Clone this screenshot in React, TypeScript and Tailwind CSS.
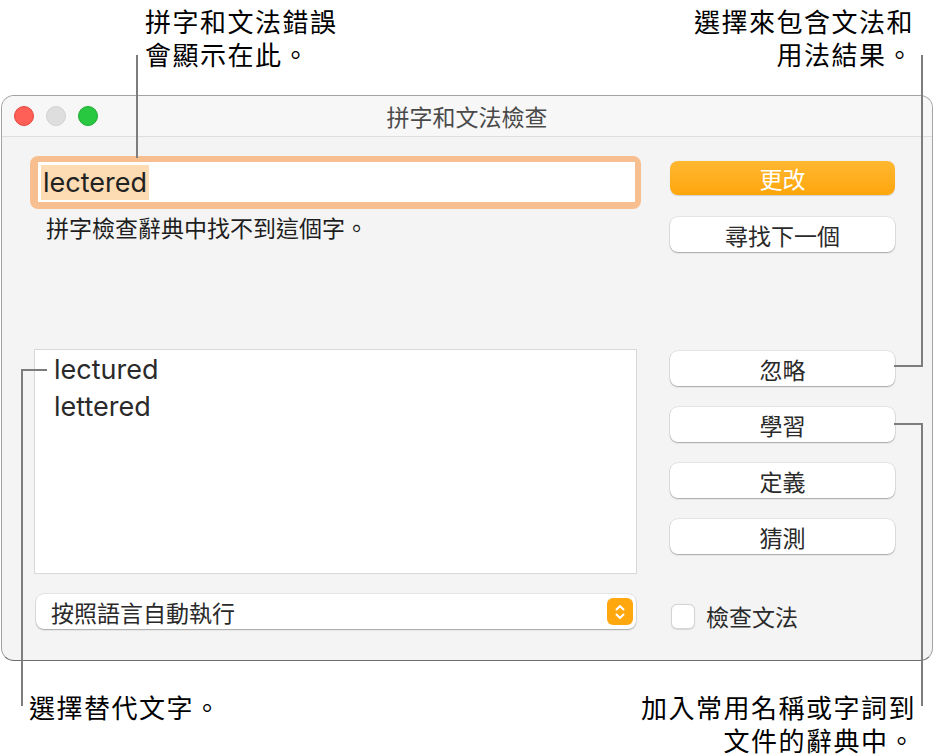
import React from "react";

const cjk = '"Noto Sans CJK TC", "Noto Sans CJK SC", sans-serif';
const latin = 'Inter, "Noto Sans CJK TC", sans-serif';

function Btn({ label, className = "" }: { label: string; className?: string }) {
  return (
    <div
      className={
        "h-[35px] w-[225px] rounded-[8px] bg-white flex items-center justify-center text-[23px] leading-[28px] text-[#2a2a2a] shadow-[0_0_0_0.5px_rgba(0,0,0,0.12),0_1px_1.5px_rgba(0,0,0,0.28)] " +
        className
      }
      style={{ fontFamily: cjk }}
    >
      {label}
    </div>
  );
}

export default function App() {
  return (
    <div className="relative w-[935px] h-[756px] bg-white overflow-hidden" style={{ fontFamily: cjk }}>
      {/* Window */}
      <div className="absolute left-[1px] top-[95px] w-[932px] h-[566px] rounded-[13px] border-[1.5px] border-[#a3a3a3] border-b-[#6c6c6c] bg-[#f4f4f4] flex flex-col overflow-hidden">
        {/* Title bar */}
        <div className="relative h-[41px] shrink-0 bg-[#f7f7f7] border-b border-[#dedede] flex items-center">
          <div className="flex items-center gap-[12px] pl-[12px]">
            <div className="w-[20px] h-[20px] rounded-full bg-[#fe5f57] border border-[#e2463f]" />
            <div className="w-[20px] h-[20px] rounded-full bg-[#dedede] border border-[#d0d0d0]" />
            <div className="w-[20px] h-[20px] rounded-full bg-[#28c840] border border-[#1eaa33]" />
          </div>
          <div className="absolute inset-0 flex items-center justify-center text-[23px] text-[#4a4a4a]">
            拼字和文法檢查
          </div>
        </div>
        {/* Body */}
        <div className="flex pt-[19px]">
          {/* Left column */}
          <div className="ml-[28px] w-[611px] flex flex-col">
            <div className="h-[53px] rounded-[8px] bg-[#f7bf8f] pt-[6px] pb-[7px] pl-[8px] pr-[6px]">
              <div className="h-full bg-white flex items-center pl-[3px]">
                <span
                  className="bg-[#fedcb3] text-[#222] text-[27px] leading-[35px] px-[2px]"
                  style={{ fontFamily: latin }}
                >
                  lectered
                </span>
              </div>
            </div>
            <div className="mt-[5px] ml-[16px] text-[23px] leading-[26px] text-[#1e1e1e]">
              拼字檢查辭典中找不到這個字。
            </div>
            <div
              className="mt-[109px] ml-[4px] w-[603px] h-[225px] bg-white border border-[#d8d8d8] pl-[19px] pt-[1px] text-[27px] leading-[37px] text-[#2a2a2a]"
              style={{ fontFamily: latin }}
            >
              <div>lectured</div>
              <div>lettered</div>
            </div>
            <div className="mt-[20px] ml-[6px] w-[600px] h-[35px] rounded-[8px] bg-white shadow-[0_0_0_0.5px_rgba(0,0,0,0.12),0_1px_1.5px_rgba(0,0,0,0.28)] flex items-center justify-between pl-[15px] pr-[3px]">
              <span className="text-[23px] leading-[28px] text-[#2a2a2a]">按照語言自動執行</span>
              <div className="w-[26px] h-[27px] rounded-[6px] bg-[#ffa70f] flex items-center justify-center">
                <svg width="14" height="20" viewBox="0 0 14 20" fill="none">
                  <path d="M3.5 7.5 L7 4 L10.5 7.5" stroke="white" strokeWidth="2" strokeLinecap="round" strokeLinejoin="round" />
                  <path d="M3.5 12.5 L7 16 L10.5 12.5" stroke="white" strokeWidth="2" strokeLinecap="round" strokeLinejoin="round" />
                </svg>
              </div>
            </div>
          </div>
          {/* Right column */}
          <div className="ml-[29px] w-[225px] flex flex-col">
            <div className="mt-[5px] h-[34px] w-[225px] rounded-[8px] bg-gradient-to-b from-[#ffb72e] to-[#ffa607] flex items-center justify-center text-[23px] leading-[28px] text-white shadow-[0_0.5px_1px_rgba(0,0,0,0.15)]">
              更改
            </div>
            <Btn label="尋找下一個" className="mt-[22px]" />
            <Btn label="忽略" className="mt-[99px]" />
            <Btn label="學習" className="mt-[21px]" />
            <Btn label="定義" className="mt-[21px]" />
            <Btn label="猜測" className="mt-[21px]" />
            <div className="mt-[49px] h-[26px] flex items-center">
              <div className="ml-[1px] w-[24px] h-[25px] rounded-[6px] bg-white border border-[#d4d4d4] shadow-[0_0.5px_1px_rgba(0,0,0,0.12)]" />
              <span className="ml-[11px] text-[23px] leading-[26px] text-[#2a2a2a]">檢查文法</span>
            </div>
          </div>
        </div>
      </div>

      {/* Callout texts */}
      <div className="absolute left-[145px] top-[4px] text-[26px] leading-[33px] tracking-[1.5px] text-black">
        <div>拼字和文法錯誤</div>
        <div>會顯示在此。</div>
      </div>
      <div className="absolute right-[21px] top-[4px] text-[26px] leading-[33px] tracking-[1.5px] text-black text-right">
        <div>選擇來包含文法和</div>
        <div>用法結果。</div>
      </div>
      <div className="absolute left-[29px] top-[690px] text-[26px] leading-[33px] tracking-[1.5px] text-black">
        選擇替代文字。
      </div>
      <div className="absolute right-[19px] top-[690px] text-[26px] leading-[33px] tracking-[1.5px] text-black text-right">
        <div>加入常用名稱或字詞到</div>
        <div>文件的辭典中。</div>
      </div>

      {/* Callout lines */}
      <div className="absolute left-[136px] top-[55px] w-[2px] h-[103px] bg-[#7d7d7d]" />
      <div className="absolute left-[921px] top-[55px] w-[2px] h-[312px] bg-[#7d7d7d]" />
      <div className="absolute left-[894px] top-[365px] w-[29px] h-[2px] bg-[#7d7d7d]" />
      <div className="absolute left-[921px] top-[423px] w-[2px] h-[283px] bg-[#7d7d7d]" />
      <div className="absolute left-[894px] top-[423px] w-[29px] h-[2px] bg-[#7d7d7d]" />
      <div className="absolute left-[21px] top-[369px] w-[2px] h-[337px] bg-[#7d7d7d]" />
      <div className="absolute left-[21px] top-[369px] w-[26px] h-[2px] bg-[#7d7d7d]" />
    </div>
  );
}
